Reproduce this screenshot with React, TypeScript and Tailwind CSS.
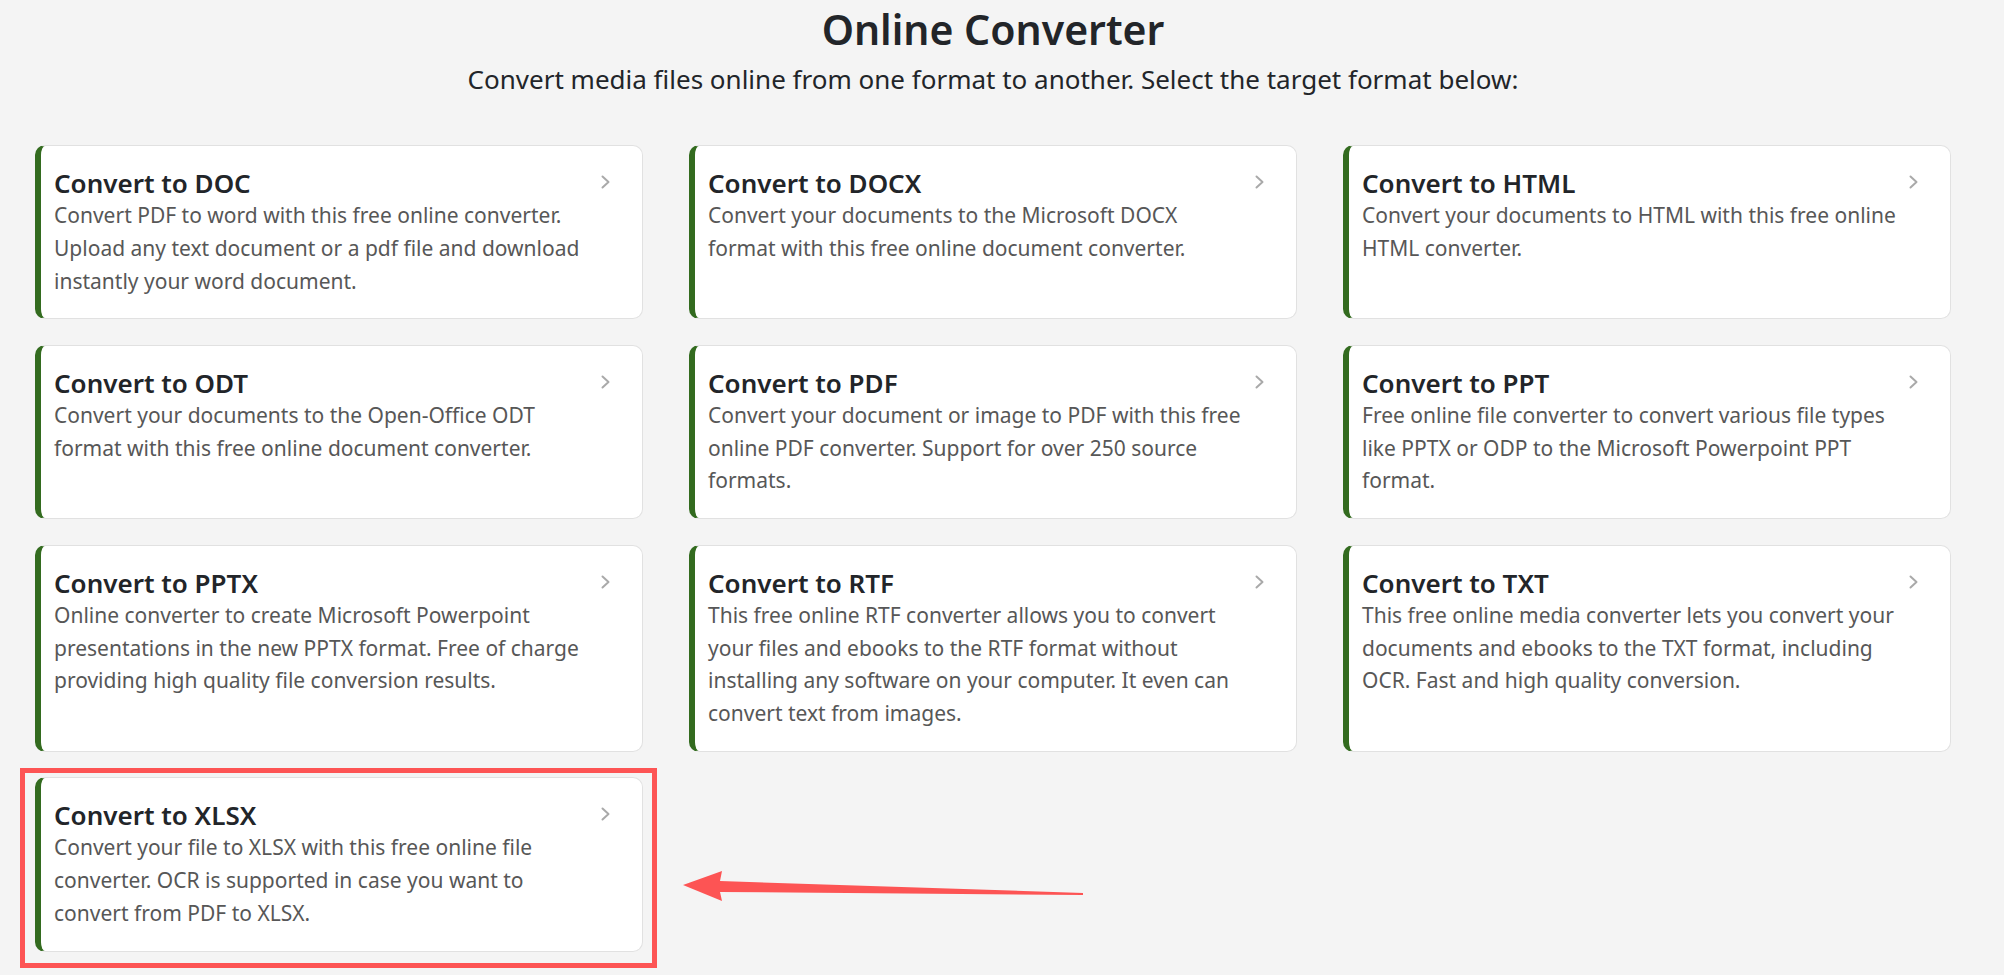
import React from 'react';

type Format = {
  title: string;
  text: string;
  highlighted?: boolean;
};

const formats: Format[] = [
  {
    title: 'Convert to DOC',
    text: 'Convert PDF to word with this free online converter. Upload any text document or a pdf file and download instantly your word document.',
  },
  {
    title: 'Convert to DOCX',
    text: 'Convert your documents to the Microsoft DOCX format with this free online document converter.',
  },
  {
    title: 'Convert to HTML',
    text: 'Convert your documents to HTML with this free online HTML converter.',
  },
  {
    title: 'Convert to ODT',
    text: 'Convert your documents to the Open-Office ODT format with this free online document converter.',
  },
  {
    title: 'Convert to PDF',
    text: 'Convert your document or image to PDF with this free online PDF converter. Support for over 250 source formats.',
  },
  {
    title: 'Convert to PPT',
    text: 'Free online file converter to convert various file types like PPTX or ODP to the Microsoft Powerpoint PPT format.',
  },
  {
    title: 'Convert to PPTX',
    text: 'Online converter to create Microsoft Powerpoint presentations in the new PPTX format. Free of charge providing high quality file conversion results.',
  },
  {
    title: 'Convert to RTF',
    text: 'This free online RTF converter allows you to convert your files and ebooks to the RTF format without installing any software on your computer. It even can convert text from images.',
  },
  {
    title: 'Convert to TXT',
    text: 'This free online media converter lets you convert your documents and ebooks to the TXT format, including OCR. Fast and high quality conversion.',
  },
  {
    title: 'Convert to XLSX',
    text: 'Convert your file to XLSX with this free online file converter. OCR is supported in case you want to convert from PDF to XLSX.',
    highlighted: true,
  },
];

const Chevron = () => (
  <svg className="h-[14px] w-[11px] shrink-0 mt-[8px]" viewBox="0 0 11 14" fill="none">
    <path d="M2.5 1.5 L8.5 7 L2.5 12.5" stroke="#a9a9a9" strokeWidth="2" strokeLinecap="round" strokeLinejoin="round" />
  </svg>
);

const FormatCard = ({ item }: { item: Format }) => (
  <a
    href="#"
    className="flex h-full rounded-[10px] border border-[#e1e1e1] border-l-[6px] border-l-[#336b1f] bg-white pl-[13px] pr-[31px] pt-[21px] pb-[21px]"
  >
    <div className="w-[535px]">
      <h3 className="text-[26px] leading-[32px] font-semibold text-[#222529]">{item.title}</h3>
      <p className="text-[21px] leading-[32.8px] text-[#575757]">{item.text}</p>
    </div>
    <div className="ml-auto">
      <Chevron />
    </div>
  </a>
);

export default function App() {
  return (
    <div
      className="relative min-h-screen bg-[#f4f4f4] pl-[35px] pr-[53px] pt-[4px] pb-[30px]"
      style={{ fontFamily: '"Noto Sans", "Open Sans", sans-serif' }}
    >
      <h1 className="text-center text-[41px] leading-[50px] font-semibold text-[#222529]">Online Converter</h1>
      <p className="mt-[8px] text-center text-[26px] leading-[34px] text-[#222529]">
        Convert media files online from one format to another. Select the target format below:
      </p>

      <div className="mt-[49px] grid grid-cols-3 gap-x-[46px] gap-y-[25.5px]">
        {formats.map((item) =>
          item.highlighted ? (
            <div key={item.title} className="relative">
              <FormatCard item={item} />
              <div className="pointer-events-none absolute -left-[15px] -right-[14px] -top-[9px] -bottom-[16px] border-[5px] border-[#fd5454]" />
            </div>
          ) : (
            <FormatCard key={item.title} item={item} />
          )
        )}
      </div>

      {/* annotation arrow */}
      <svg className="pointer-events-none absolute left-0 top-0" width="2004" height="975">
        <polygon
          points="683,885 722,871 720,881 1083,893 1083,895 720,892 722,901"
          fill="#fd5454"
        />
      </svg>
    </div>
  );
}
